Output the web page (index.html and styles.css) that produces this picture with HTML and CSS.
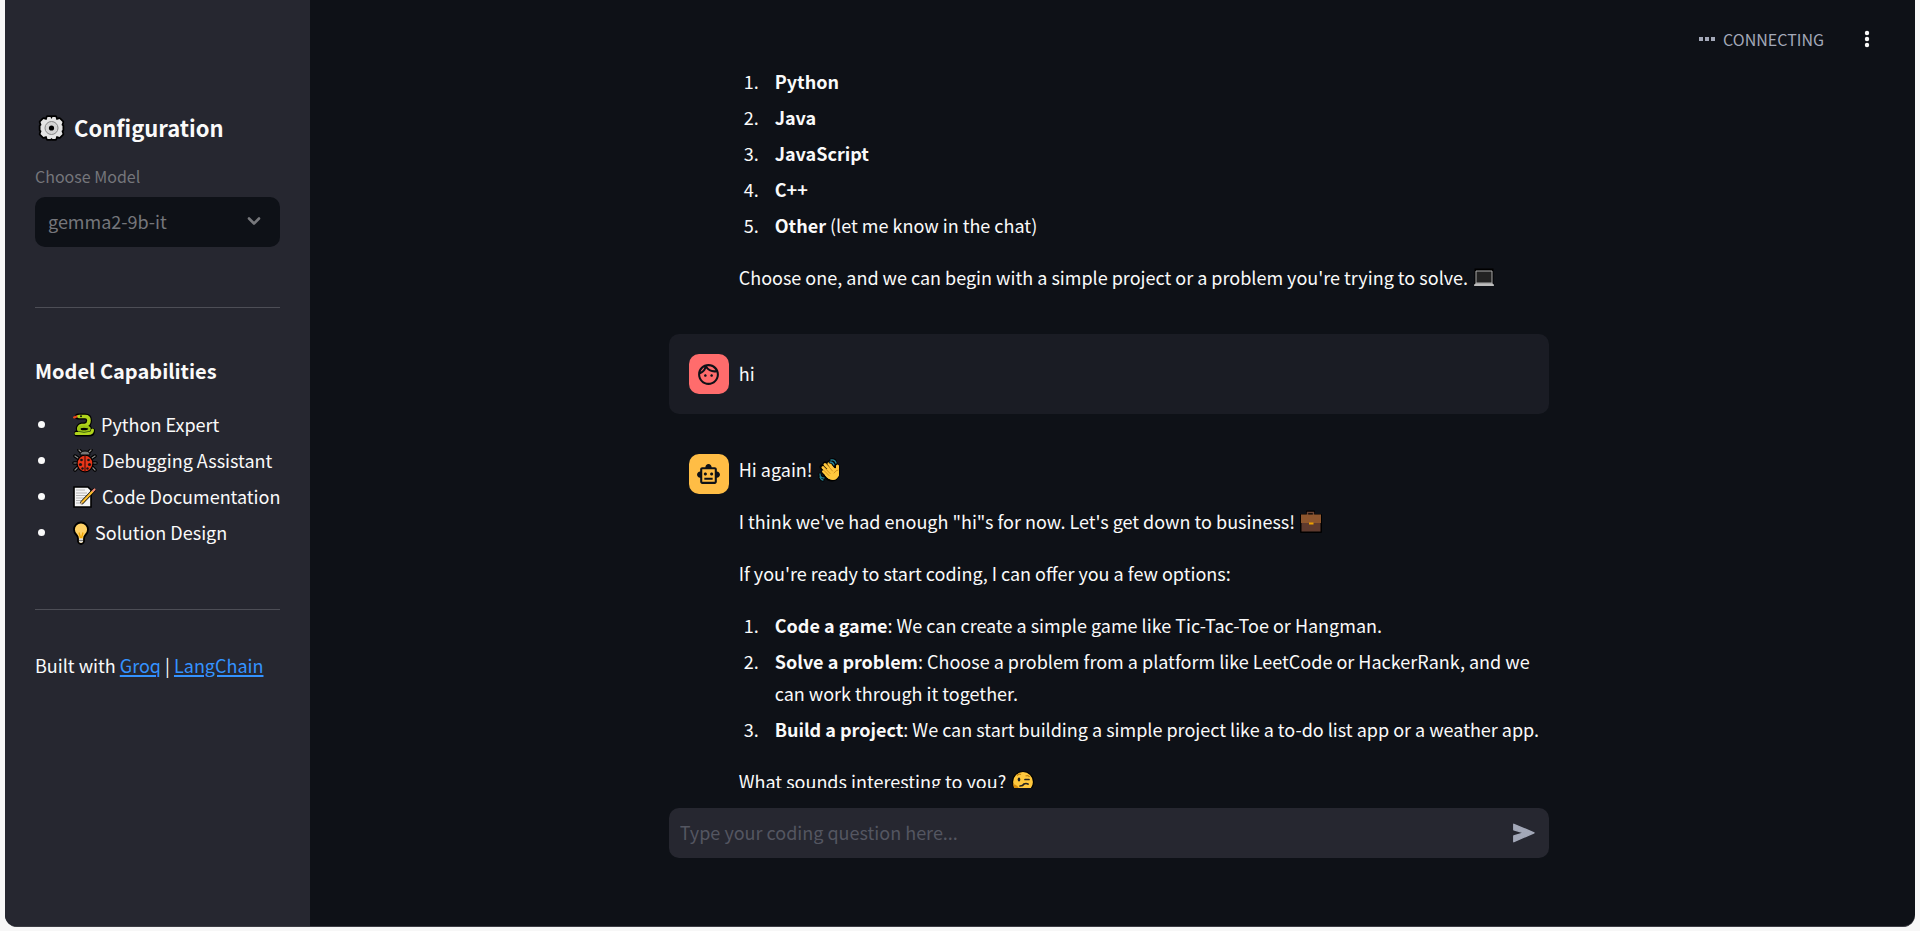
FILE: index.html
```html
<!DOCTYPE html>
<html lang="en">
<head>
<meta charset="utf-8">
<title>Code assistant</title>
<link rel="stylesheet" href="styles.css">
</head>
<body>
<div class="app">
  <aside class="sidebar">
    <h2 class="sidebar-title"><svg class="emoji" width="34" height="28" viewBox="0 0 34 28" aria-hidden="true"><g transform="translate(16.500 14)"><g fill="#000" stroke="#000" stroke-width="3.500" stroke-linejoin="round"><path d="M-4-11h3l1 2 1-2h3l1 3 3-1 3 3-1 3 1 1v4l-1 1 1 3-3 3-3-1-1 3h-3l-1-1-1 1h-3l-1-3-3 1-3-3 1-3-1-1v-4l1-1-1-3 3-3 3 1z"/></g><path fill="#e4e4e4" d="M-4-11h3l1 2 1-2h3l1 3 3-1 3 3-1 3 1 1v4l-1 1 1 3-3 3-3-1-1 3h-3l-1-1-1 1h-3l-1-3-3 1-3-3 1-3-1-1v-4l1-1-1-3 3-3 3 1z"/><circle r="6.500" fill="#d5d5d5" stroke="#888" stroke-width="1"/><circle r="2.600" fill="#000"/></g></svg> Configuration</h2>
    <label class="field-label" for="model">Choose Model</label>
    <div class="select-box">
      <select id="model" disabled><option>gemma2-9b-it</option></select>
      <svg class="chevron" width="16" height="12" viewBox="0 0 16 12" aria-hidden="true"><path d="M3 3.500l5 5 5-5" fill="none" stroke="#77787c" stroke-width="2.600" stroke-linecap="round" stroke-linejoin="round"/></svg>
    </div>
    <hr>
    <h3 class="section-title">Model Capabilities</h3>
    <ul class="list">
      <li><svg class="emoji" width="26" height="24" viewBox="0 0 26 24" aria-hidden="true"><g fill="none" stroke-linecap="round" stroke-linejoin="round"><g stroke="#000" stroke-width="6"><path d="M7 3.500h7q4 0 4 4t-4 5h-3q-4 1-3 4"/><path d="M6 20.500h12q3 0 3-2.500"/><ellipse cx="13" cy="16" rx="5" ry="2"/></g><path d="M3 4.500l4-1.500" stroke="#e8471c" stroke-width="2"/><path d="M8 3.500h6q4 0 4 4t-4 5h-3q-4 1-3 4" stroke="#b0d41c" stroke-width="3.600"/><ellipse cx="13" cy="16" rx="5.500" ry="2.500" stroke="#9cc414" stroke-width="2.500"/><path d="M5 20.500h12q4.500 0 4.500-3.500" stroke="#b0d41c" stroke-width="3"/><path d="M8 18.500q5 2 10 0" stroke="#466a10" stroke-width="1"/></g><circle cx="10" cy="3.300" r="1" fill="#111"/></svg> Python Expert</li>
      <li><svg class="emoji" width="27" height="24" viewBox="0 0 27 24" aria-hidden="true"><g fill="none" stroke-linecap="round"><path d="M10 3L8 1M18 3l2-2M7 9L4 7M6 14H3M7 18l-3 3M21 9l3-2M22 14h3M21 18l3 3" stroke="#000" stroke-width="3.500"/><path d="M10 3L8 1M18 3l2-2M7 9L4 7M6 14H3M7 18l-3 3M21 9l3-2M22 14h3M21 18l3 3" stroke="#888" stroke-width="1.200"/></g><ellipse cx="14" cy="14.500" rx="8.500" ry="9" fill="#000"/><path d="M9 6q0-4 5-4t5 4z" fill="#777" stroke="#000"/><ellipse cx="14" cy="14.500" rx="7.300" ry="7.800" fill="#e8371a"/><path d="M14 6.500v16" stroke="#300" stroke-width="1"/><g fill="#161616"><circle cx="10.500" cy="11" r="1.300"/><circle cx="17.500" cy="11" r="1.300"/><circle cx="9.500" cy="15.500" r="1.600"/><circle cx="18.500" cy="15.500" r="1.600"/><circle cx="11.500" cy="19.500" r="1.200"/><circle cx="16.500" cy="19.500" r="1.200"/></g></svg> Debugging Assistant</li>
      <li><svg class="emoji" width="27" height="24" viewBox="0 0 27 24" aria-hidden="true"><path d="M3 2h14l3 3v17H3z" fill="#f4f4f4" stroke="#000" stroke-width="1.600"/><path d="M5 5h9M5 8h11M5 10.500h11M5 13h8M5 15.500h5M5 18h5" stroke="#b5b5b5" stroke-width="1.200"/><path d="M11 17.500L23 5" stroke="#000" stroke-width="3.600" stroke-linecap="round"/><path d="M11 17.500L22 6" stroke="#fdbf2d" stroke-width="2.200"/><path d="M22 6l1.500-1.500" stroke="#f08c7a" stroke-width="2.200" stroke-linecap="round"/><path d="M9 19.500l1.200-3 1.800 1.700z" fill="#e6c08a"/></svg> Code Documentation</li>
      <li><svg class="emoji" width="20" height="24" viewBox="0 0 20 24" aria-hidden="true"><path d="M10 1.500a7 7 0 0 1 7 7q0 3-2.500 5.500-1.500 1.500-1.500 3.500v3q-1 2.500-3 2.500t-3-2.500v-3q0-2-1.500-3.500Q3 11.500 3 8.500a7 7 0 0 1 7-7z" fill="#ffd166" stroke="#000" stroke-width="1.800"/><path d="M8 11.500l1.500 5.500M12 11.500L10.500 17" stroke="#f0a500" stroke-width="1.300"/><path d="M8 17.500h4v3q-2 2.500-4 0z" fill="#d8d8d8"/><path d="M8 19.500h4" stroke="#777"/></svg> Solution Design</li>
    </ul>
    <hr>
    <p class="credits">Built with <a href="#groq">Groq</a> | <a href="#langchain">LangChain</a></p>
  </aside>

  <main class="main">
    <header class="topbar">
      <span class="status"><svg width="16" height="4" viewBox="0 0 16 4" aria-hidden="true"><path fill="#a3a8b8" d="M0 0h4v4H0zM6 0h4v4H6zM12 0h4v4h-4z"/></svg>CONNECTING</span>
      <button class="menu" type="button" aria-label="Main menu"><svg width="6" height="18" viewBox="0 0 6 18" aria-hidden="true"><g fill="#fafafa"><circle cx="3" cy="3" r="2.200"/><circle cx="3" cy="9" r="2.200"/><circle cx="3" cy="15" r="2.200"/></g></svg></button>
    </header>

    <section class="thread">
      <article class="message continued">
        <div class="body">
          <ol class="list">
            <li><strong>Python</strong></li>
            <li><strong>Java</strong></li>
            <li><strong>JavaScript</strong></li>
            <li><strong>C++</strong></li>
            <li><strong>Other</strong> (let me know in the chat)</li>
          </ol>
          <p>Choose one, and we can begin with a simple project or a problem you're trying to solve. <svg class="emoji" width="27" height="24" viewBox="0 0 27 24" aria-hidden="true"><path d="M4 4h16v13H4z" fill="#222" stroke="#000" stroke-width="3"/><path d="M4 5h16v12H4z" fill="#222" stroke="#aaa" stroke-width="1"/><path d="M3.500 17h17l1.500 3H2z" fill="#a8a8a8"/><path d="M2 19h20" stroke="#d0d0d0" stroke-width="1"/></svg></p>
        </div>
      </article>

      <article class="message user">
        <div class="avatar avatar-user"><svg width="25" height="25" viewBox="0 0 24 24" aria-hidden="true"><path d="M10.250 13c0 .69-.56 1.250-1.250 1.250S7.750 13.690 7.750 13 8.310 11.750 9 11.750s1.250.56 1.250 1.250zM15 11.750c-.69 0-1.250.56-1.250 1.250s.56 1.250 1.250 1.250 1.250-.56 1.250-1.250-.56-1.250-1.250-1.250zM22 12c0 5.520-4.480 10-10 10S2 17.520 2 12 6.480 2 12 2s10 4.480 10 10zM10.660 4.120C12.060 6.440 14.600 8 17.500 8c.46 0 .91-.05 1.340-.12C17.440 5.560 14.900 4 12 4c-.46 0-.91.05-1.340.12zM4.420 9.470c1.710-.97 3.030-2.550 3.660-4.440C6.370 6 5.050 7.580 4.420 9.470zM20 12c0-.78-.12-1.530-.33-2.240-.7.15-1.420.24-2.170.24-3.130 0-5.920-1.440-7.760-3.690C8.690 8.870 6.600 10.880 4 11.860c.01.04 0 .09 0 .14 0 4.410 3.590 8 8 8s8-3.590 8-8z"/></svg></div>
        <div class="body"><p>hi</p></div>
      </article>

      <article class="message">
        <div class="avatar avatar-bot"><svg width="25" height="25" viewBox="0 0 24 24" aria-hidden="true"><path d="M20 9V7c0-1.100-.9-2-2-2h-3c0-1.660-1.340-3-3-3S9 3.340 9 5H6c-1.100 0-2 .9-2 2v2c-1.660 0-3 1.340-3 3s1.340 3 3 3v4c0 1.100.9 2 2 2h12c1.100 0 2-.9 2-2v-4c1.660 0 3-1.340 3-3s-1.340-3-3-3zm-2 10H6V7h12v12zm-9-6c-.83 0-1.500-.67-1.500-1.500S8.170 10 9 10s1.500.67 1.500 1.500S9.830 13 9 13zm7.500-1.500c0 .83-.67 1.500-1.500 1.500s-1.500-.67-1.500-1.500.67-1.500 1.500-1.500 1.500.67 1.500 1.500zM8 15h8v2H8v-2z"/></svg></div>
        <div class="body">
          <p>Hi again! <svg class="emoji" width="27" height="24" viewBox="0 0 27 24" aria-hidden="true"><g fill="none" stroke-linecap="round" stroke-linejoin="round"><path d="M8 6l9 9M5 9l9 9M7 14l6 6M12 5l6 8M20 8v9" stroke="#000" stroke-width="5"/><path d="M10 12l10-1 1 5q-1 6-6 6-4 0-7-4z" fill="#000" stroke="#000" stroke-width="3"/><path d="M10 12l10-1 1 5q-1 5-5 5-4 0-7-4z" fill="#ffc83d" stroke="#ffc83d" stroke-width="2"/><path d="M8 6.500l9 9M6 9.500l9 9M6.500 13.500l6 6M12 5.500l6 8M20.500 8v9" stroke="#ffc83d" stroke-width="3"/><path d="M9.500 6l6 7M7 9l6 6.500M7 12.500l5 5M17 15q2-3 4-3" stroke="#c98a1a" stroke-width=".9"/><path d="M14 2q4-1 5 3M13 4q3 0 4 3M3 16q0 4 4 4M3 19q1 3 3 3" stroke="#000" stroke-width="3"/><path d="M14 2q4-1 5 3M13 4q3 0 4 3M3 16q0 4 4 4M3 19q1 3 3 3" stroke="#237f92" stroke-width="1.300"/></g></svg></p>
          <p>I think we've had enough "hi"s for now. Let's get down to business! <svg class="emoji" width="27" height="24" viewBox="0 0 27 24" aria-hidden="true"><path d="M8 5V1.500h7V5h7v17H2V5z" fill="#000" stroke="#000" stroke-width="2" stroke-linejoin="round"/><path d="M8.500 5V2.500h6V5" fill="none" stroke="#6d4534" stroke-width="1.400"/><path d="M2.500 5h19v16.500h-19z" fill="#5f3a2e"/><path d="M2 4.500h20V13H2z" fill="#8e562e"/><path d="M10 12.500h4.500v2H10z" fill="#eda100"/></svg></p>
          <p>If you're ready to start coding, I can offer you a few options:</p>
          <ol class="list">
            <li><strong>Code a game</strong>: We can create a simple game like Tic-Tac-Toe or Hangman.</li>
            <li><strong>Solve a problem</strong>: Choose a problem from a platform like LeetCode or HackerRank, and we can work through it together.</li>
            <li><strong>Build a project</strong>: We can start building a simple project like a to-do list app or a weather app.</li>
          </ol>
          <p>What sounds interesting to you? <svg class="emoji" width="27" height="24" viewBox="0 0 27 24" aria-hidden="true"><circle cx="13" cy="12" r="10.500" fill="#ffc83d" stroke="#000" stroke-width="1.200"/><path d="M3 14q5 1 6 5l2 3q-7 0-8-8z" fill="#d68d0c"/><path d="M7 5.500q2-2 4-1M15.500 6q3-1 4 1" fill="none" stroke="#c28211" stroke-width="1.300"/><ellipse cx="9" cy="9.500" rx="1.300" ry="2" fill="#222"/><path d="M15 9.500h4M10 16q3 0 4-2 2-1 4 0" fill="none" stroke="#222" stroke-width="1.700" stroke-linecap="round"/></svg></p>
        </div>
      </article>
    </section>

    <form class="composer">
      <input type="text" aria-label="Coding question" placeholder="Type your coding question here...">
      <button class="send" type="button" aria-label="Send"><svg width="24" height="22" viewBox="0 0 24 22" aria-hidden="true"><path d="M1.800 2.300l20.200 8.500-20.200 8.900v-5.700l10.200-3.200-10.200-3z" fill="#a3a8b8" stroke="#a3a8b8" stroke-width="1.400" stroke-linejoin="round"/></svg></button>
    </form>
  </main>
</div>
</body>
</html>
```
FILE: styles.css
```css
* { box-sizing: border-box; }

body {
  margin: 0;
  background: #f7f7f7;
  color: #fafafa;
  font-family: "Noto Sans CJK SC", "Noto Sans", sans-serif;
  font-size: 18px;
  line-height: 32px;
}

h2, h3, p, ul, ol { margin: 0; padding: 0; }

.app {
  display: flex;
  height: calc(100vh - 4px);
  margin: 0 5px;
  overflow: hidden;
  background: #0e1117;
  border-bottom: 1px solid #3c3d44;
  border-radius: 0 0 12px 12px;
}

.sidebar {
  flex: 0 0 305px;
  padding: 109px 30px 0;
  background: #262730;
}

.sidebar-title {
  font-size: 22px;
  font-weight: 700;
  line-height: 36px;
}

.field-label {
  display: block;
  padding: 16px 0 6px;
  font-size: 16px;
  line-height: 30px;
  color: #75767b;
}

.select-box {
  display: flex;
  align-items: center;
  height: 50px;
  padding: 0 18px 2px 13px;
  background: #0e1117;
  border-radius: 10px;
}

.select-box select {
  flex: 1;
  min-width: 0;
  padding: 0;
  border: 0;
  appearance: none;
  background: transparent;
  color: #75767b;
  font: inherit;
  opacity: 1;
}

hr {
  height: 1px;
  margin: 60px 0 45px;
  border: 0;
  background: #4d4e56;
}

.section-title {
  margin-bottom: 19px;
  font-size: 20px;
  font-weight: 700;
  line-height: 36px;
}

.list {
  display: flex;
  flex-direction: column;
  gap: 4px;
}

.list li {
  margin-left: 24px;
  padding-left: 12px;
}

.sidebar .list li { white-space: nowrap; }
.sidebar .list + hr { margin: 61px 0 39px; }

.credits a {
  color: #3493ff;
  text-decoration-thickness: 2px;
  text-underline-offset: 2px;
}

.emoji { vertical-align: -5px; }

.main {
  flex: 1;
  display: flex;
  flex-direction: column;
  min-width: 0;
}

.topbar {
  display: flex;
  flex: 0 0 66px;
  justify-content: flex-end;
  align-items: center;
  gap: 32px;
  padding: 11px 37px 0 0;
}

.status {
  display: flex;
  align-items: center;
  gap: 8px;
  font-size: 16px;
  color: #a3a8b8;
}

.menu, .send {
  display: grid;
  place-items: center;
  padding: 8px;
  border: 0;
  background: none;
}

.thread {
  flex: 1;
  display: flex;
  flex-direction: column;
  gap: 20px;
  min-height: 0;
  overflow: hidden;
}

.thread, .composer {
  width: 880px;
  max-width: 100%;
  margin: 0 auto;
  translate: -4px 0;
}

.message {
  display: flex;
  flex-shrink: 0;
  gap: 10px;
  padding: 20px 8px 20px 20px;
}

.message.continued { padding: 0 8px 20px 70px; }

.message.user {
  align-items: center;
  background: #1a1c24;
  border-radius: 10px;
}

.body {
  flex: 1;
  display: flex;
  flex-direction: column;
  gap: 20px;
  min-width: 0;
  margin: -1px 0 1px;
}

.avatar {
  display: grid;
  place-items: center;
  flex: 0 0 40px;
  height: 40px;
  border-radius: 10px;
  fill: #0e1117;
}

.avatar-user { background: #ff6c6c; }
.avatar-bot { background: #ffbd45; }

.composer {
  display: flex;
  align-items: center;
  flex: 0 0 50px;
  margin: 20px auto 68px;
  padding: 0 5px 0 11px;
  background: #262730;
  border-radius: 10px;
}

.composer input {
  flex: 1;
  min-width: 0;
  padding: 0 0 2px;
  border: 0;
  outline: 0;
  background: transparent;
  color: #fafafa;
  font: inherit;
}

.composer input::placeholder { color: #545661; }
```
